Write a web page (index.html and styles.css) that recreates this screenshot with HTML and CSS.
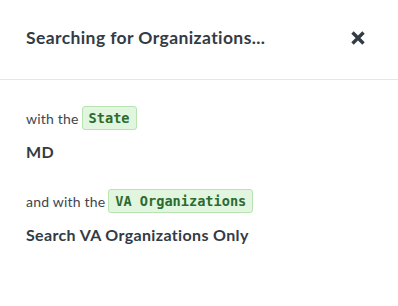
FILE: index.html
```html
<!DOCTYPE html>
<html>
<head>
<meta charset="utf-8">
<link rel="stylesheet" href="styles.css">
</head>
<body>
<div class="panel">
  <div class="header">
    <h2 class="title">Searching for Organizations...</h2>
    <button class="close" aria-label="Close">
      <svg width="16" height="16" viewBox="0 0 16 16"><path d="M2.5 2.5 L13.5 13.5 M13.5 2.5 L2.5 13.5" stroke="#333b45" stroke-width="3.4" stroke-linecap="butt"/></svg>
    </button>
  </div>
  <div class="body">
    <div class="criterion">
      <div class="label">with the <code class="tag">State</code></div>
      <div class="value">MD</div>
    </div>
    <div class="criterion">
      <div class="label">and with the <code class="tag">VA Organizations</code></div>
      <div class="value">Search VA Organizations Only</div>
    </div>
  </div>
</div>
</body>
</html>
```
FILE: styles.css
```css
html, body {
  margin: 0;
  padding: 0;
  background: #ffffff;
}
body {
  font-family: Lato, "Open Sans", sans-serif;
  color: #333b45;
}
.panel {
  width: 398px;
}
.header {
  display: flex;
  align-items: center;
  justify-content: space-between;
  padding: 0 24px 0 26px;
  border-bottom: 1px solid #e6e6e6;
  box-sizing: border-box;
  height: 80px;
  padding-bottom: 4px;
}
.title {
  margin: 0;
  font-size: 17.5px;
  font-weight: 700;
  letter-spacing: 0.4px;
  color: #333b45;
}
.close {
  border: 0;
  background: none;
  padding: 0;
  width: 16px;
  height: 16px;
  display: flex;
  margin-right: 8px;
}
.body {
  padding: 26px 26px 0 26px;
}
.criterion {
  margin-bottom: 28px;
}
.label {
  font-size: 14px;
  color: #3d4551;
  display: flex;
  align-items: center;
  gap: 3px;
  height: 24px;
  letter-spacing: 0.2px;
}
.tag {
  font-family: "DejaVu Sans Mono", "Liberation Mono", monospace;
  font-weight: 700;
  font-size: 13.6px;
  letter-spacing: 0;
  color: #2b6b2f;
  background: #e1f5df;
  border: 1px solid #b8e4b4;
  border-radius: 3px;
  padding: 2px 6px;
  line-height: 18px;
}
.value {
  margin-top: 12px;
  font-size: 16px;
  font-weight: 700;
  letter-spacing: 0.35px;
  color: #333b45;
}
```
